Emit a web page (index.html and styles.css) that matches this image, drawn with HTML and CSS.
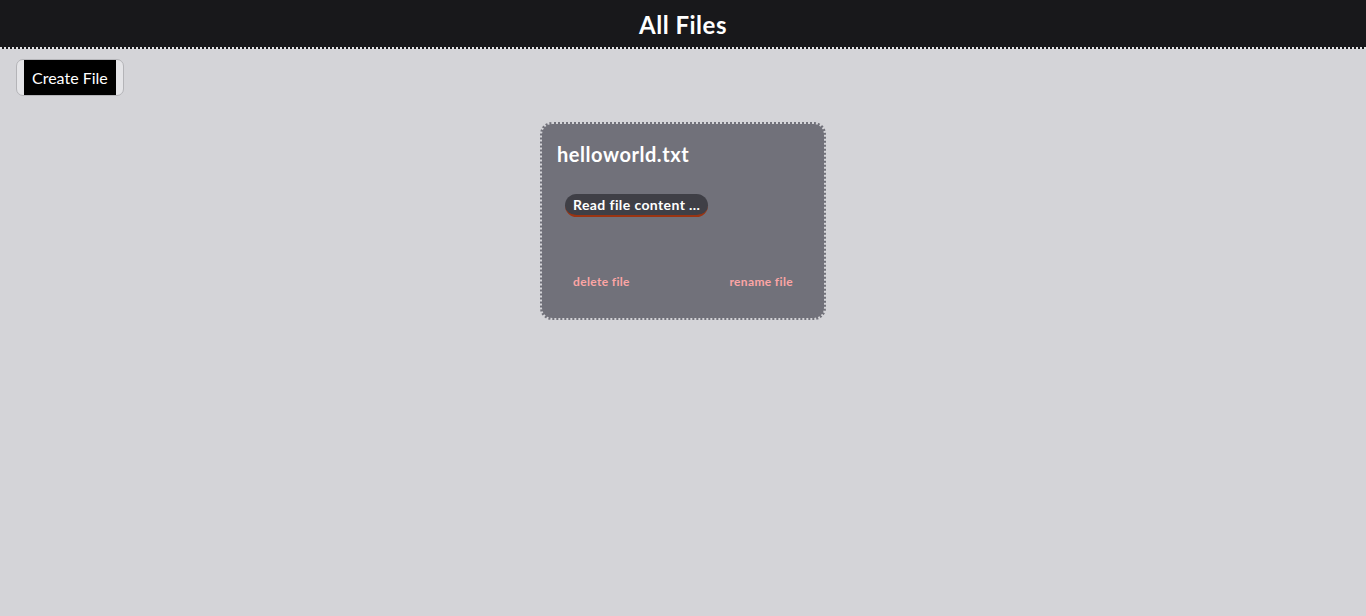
FILE: index.html
```html
<!DOCTYPE html>
<html>
<head>
<meta charset="utf-8">
<link rel="stylesheet" href="styles.css">
</head>
<body>
<header class="top"><h1 class="title">All Files</h1></header>
<main class="main">
  <div class="toolbar">
    <button class="create"><span class="create-inner">Create File</span></button>
  </div>
  <div class="files">
    <div class="card">
      <h2 class="name">helloworld.txt</h2>
      <div class="read-row"><span class="read">Read file content ...</span></div>
      <div class="actions">
        <a class="act">delete file</a>
        <a class="act">rename file</a>
      </div>
    </div>
  </div>
</main>
</body>
</html>
```
FILE: styles.css
```css
* { box-sizing: border-box; }
html, body { margin: 0; padding: 0; }
body {
  background: #d4d4d8;
  font-family: Lato, "Noto Sans", sans-serif;
  min-height: 616px;
}
.top {
  background: #18181b;
  height: 49px;
  border-bottom: 2px dotted #e4e4e7;
  display: flex;
  align-items: center;
  justify-content: center;
  padding-top: 2px;
}
.title {
  margin: 0;
  color: #fff;
  font-size: 24px;
  font-weight: 700;
  line-height: 32px;
  letter-spacing: 0.5px;
}
.main { padding: 10px 16px; }
.toolbar { display: flex; }
.create {
  padding: 0 7px;
  margin: 0;
  border: 1px solid #b4b4b8;
  border-radius: 7px;
  background: #e4e4e7;
  height: 37px;
  display: flex;
  cursor: pointer;
  font-family: inherit;
}
.create-inner {
  background: #000;
  color: #fff;
  font-size: 16px;
  padding: 0 8px;
  display: flex;
  align-items: center;
  height: 100%;
}
.files {
  display: flex;
  justify-content: center;
  margin-top: 26px;
}
.card {
  width: 286px;
  height: 198px;
  background: #71717a;
  border: 2px dotted #d4d4d8;
  border-radius: 12px;
  padding: 16px 15px;
  display: flex;
  flex-direction: column;
}
.name {
  margin: 0;
  color: #fff;
  font-size: 20px;
  font-weight: 700;
  line-height: 28px;
  letter-spacing: 0.55px;
}
.read-row { display: flex; padding-left: 8px; margin-top: 26px; }
.read {
  background: #3f3f46;
  color: #fff;
  font-size: 14px;
  font-weight: 700;
  padding: 1px 8px 0;
  height: 23px;
  line-height: 20px;
  border-radius: 12px;
  border-bottom: 2px solid #9a3412;
  letter-spacing: 0.4px;
}
.actions {
  display: flex;
  justify-content: space-between;
  padding: 0 16px;
  margin-top: auto;
  margin-bottom: 13px;
}
.act {
  color: #fca5a5;
  font-size: 12px;
  font-weight: 700;
  cursor: pointer;
  letter-spacing: 0.35px;
}
```
